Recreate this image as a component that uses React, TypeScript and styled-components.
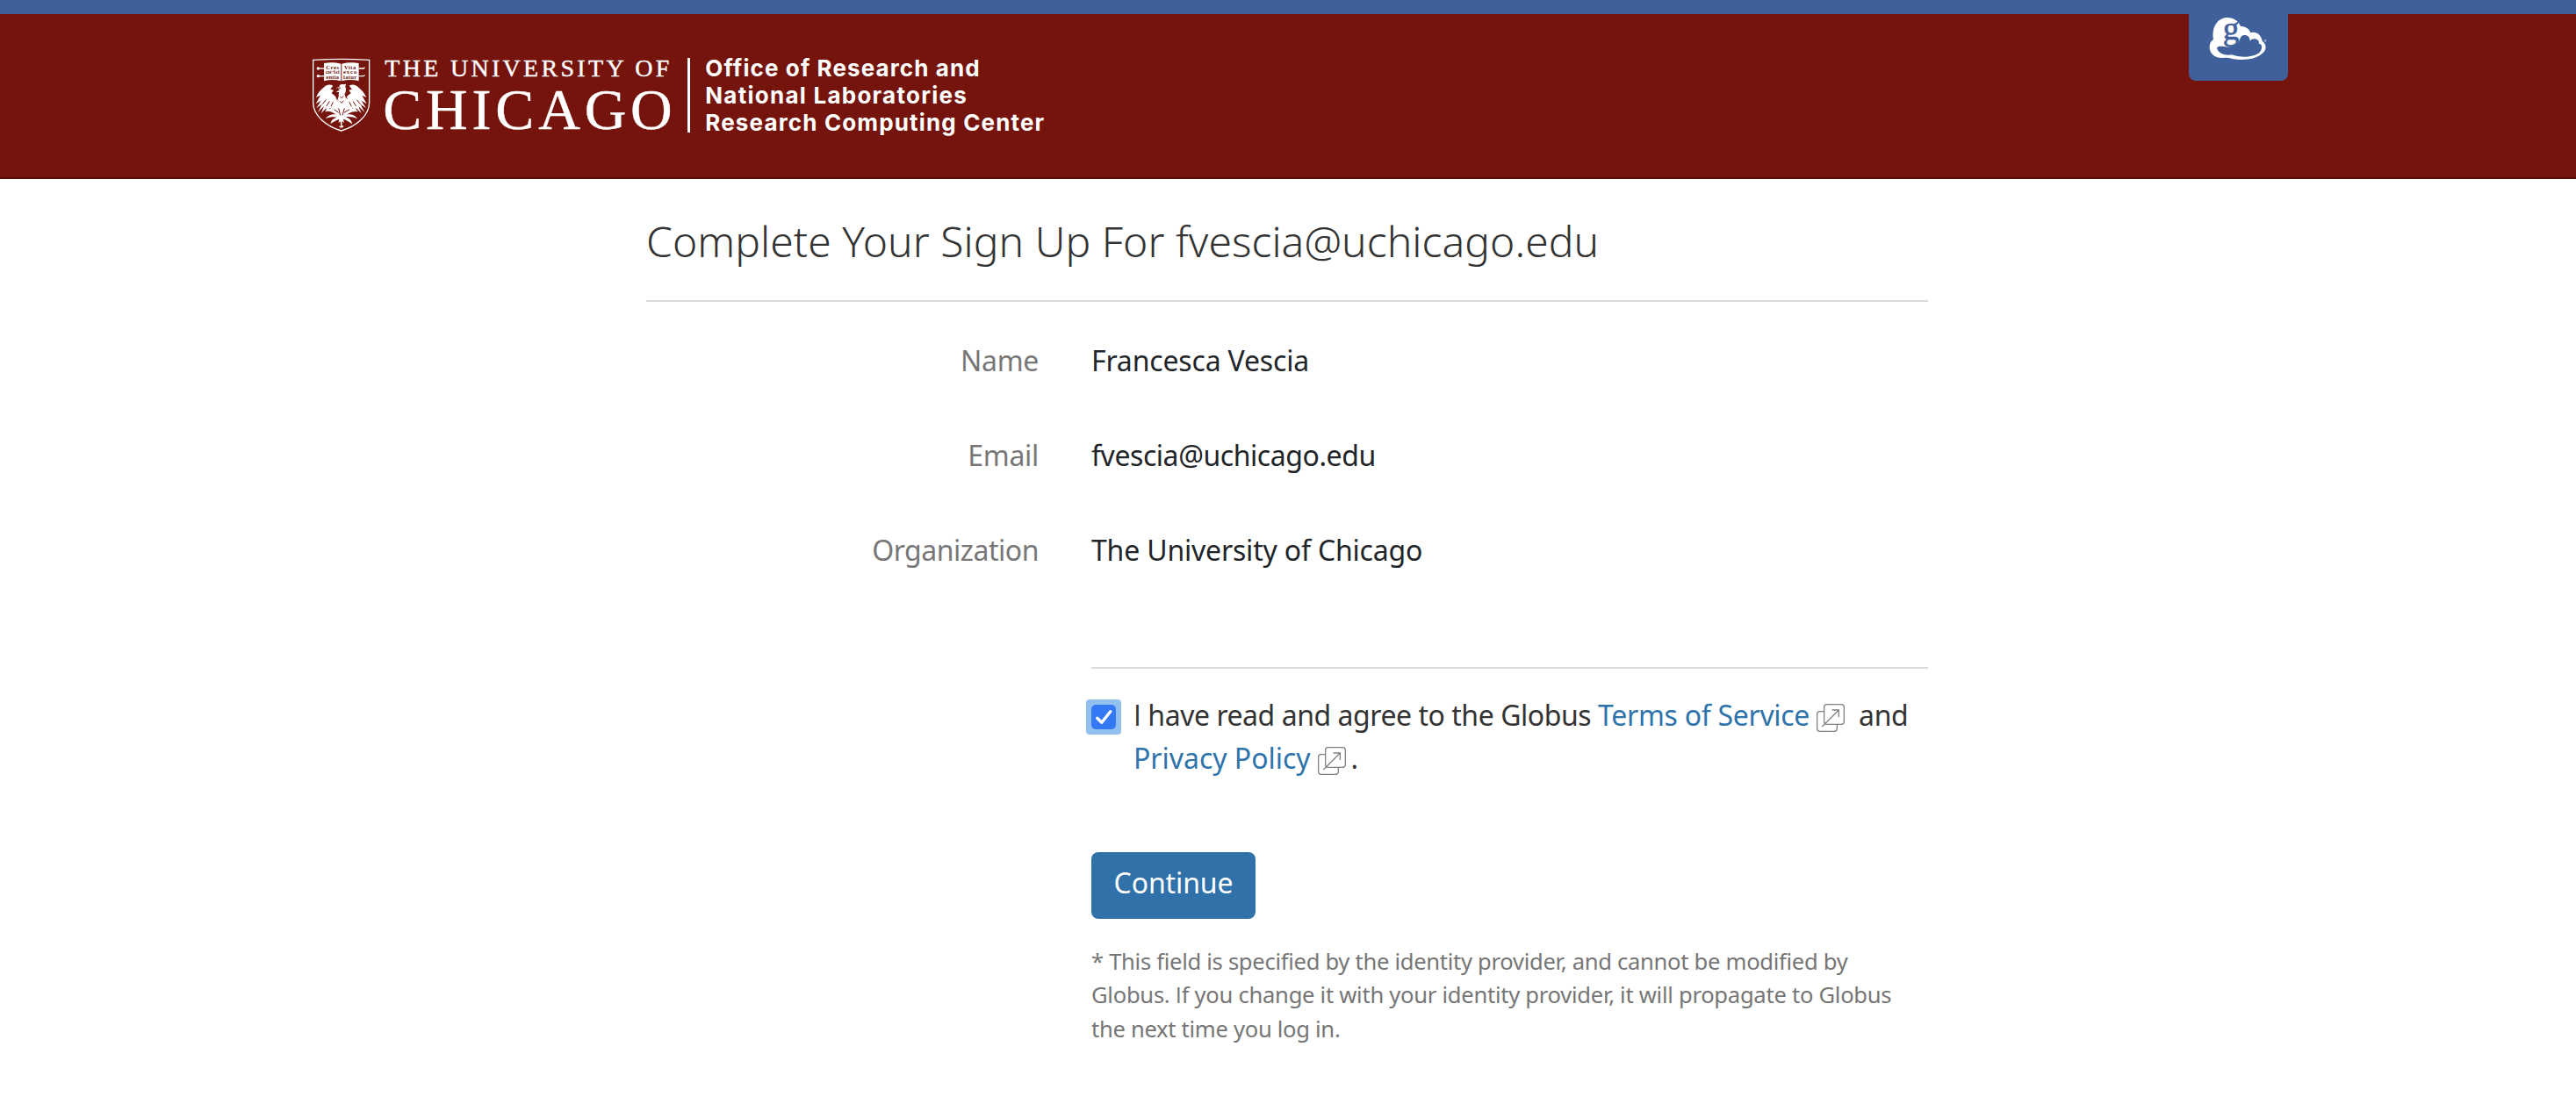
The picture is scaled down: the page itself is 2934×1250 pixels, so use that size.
import React, { useState } from 'react';
import styled, { createGlobalStyle } from 'styled-components';

const sans = '"Noto Sans", "Open Sans", sans-serif';

const GlobalStyle = createGlobalStyle`
  *, *::before, *::after { box-sizing: border-box; }
  body { margin: 0; background: #fff; font-family: ${sans}; font-weight: 370; color: #212529; }
`;

const Tracked = styled.span<{ $spacing: number }>`
  letter-spacing: ${p => p.$spacing}px;
  white-space: nowrap;
`;

const Header = styled.header`
  height: 204px;
  background: #75140d;
  border-top: 16px solid #40609b;
  border-bottom: 2px solid #56100b;
  display: flex;
  justify-content: space-between;
  align-items: flex-start;
  padding: 0 328px 0 355px;
`;

const Brand = styled.div`
  display: flex;
  align-items: flex-start;
  color: #fff;
  padding-top: 45px;
`;

const Shield = styled.svg`
  width: 67.3px;
  height: 84.7px;
  margin-top: 5px;
`;

const Wordmark = styled.div`
  margin: 3px 0 0 16px;
  width: 345px;
  font-family: "Liberation Serif", serif;
  font-weight: 400;
  white-space: nowrap;
  -webkit-text-stroke: 0.4px #fff;
`;

const WordmarkTop = styled.div`
  font-size: 28px;
  line-height: 28px;
  letter-spacing: 3.3px;
`;

const WordmarkMain = styled.div`
  font-size: 66px;
  line-height: 66px;
  letter-spacing: 4.8px;
  margin-left: -2px;
`;

const Divider = styled.div`
  width: 3px;
  height: 85px;
  margin-top: 5px;
  background: #fff;
`;

const Department = styled.div`
  margin: 1px 0 0 17px;
  font-family: Inter, sans-serif;
  font-weight: 680;
  font-size: 26px;
  line-height: 31.2px;
`;

const GlobusBadge = styled.div`
  width: 113px;
  height: 76px;
  background: #40609b;
  border-radius: 0 0 8px 8px;
  display: flex;
  padding: 2px 0 0 22px;
`;

const Cloud = styled.svg`
  width: 68.33px;
  height: 51.67px;
  overflow: visible;
`;

const Content = styled.main`
  width: 1460px;
  margin: 41px 0 0 736px;
`;

const Title = styled.h1`
  margin: 0;
  padding-bottom: 37px;
  border-bottom: 2px solid #dadada;
  font-size: 48px;
  line-height: 60px;
  font-weight: 260;
  color: #333;
`;

const Details = styled.dl`
  margin: 43px 0 0;
  display: grid;
  grid-template-columns: 447px 1fr;
  column-gap: 60px;
  grid-auto-rows: 108px;
  font-size: 32px;
  line-height: 48px;
`;

const Term = styled.dt`
  text-align: right;
  color: #777;
`;

const Detail = styled.dd`
  margin: 0;
`;

const Actions = styled.div`
  margin: 49px 0 0 507px;
  border-top: 2px solid #dadada;
  padding-top: 28px;
`;

const Consent = styled.div`
  display: flex;
  align-items: flex-start;
  font-size: 32px;
  line-height: 49px;
  color: #333;
`;

const FocusRing = styled.div`
  flex: none;
  width: 40px;
  height: 40px;
  margin: 7px 14px 0 -6px;
  padding: 6px;
  border-radius: 4px;
  background: #92c0ef;
`;

const Box = styled.button`
  width: 28px;
  height: 28px;
  padding: 0;
  border: 0;
  border-radius: 5px;
  background: #3478f6;
  display: flex;
`;

const ConsentText = styled.div`
  width: 905px;
`;

const ConsentLine = styled.div`
  display: flex;
  height: 49px;
`;

const Link = styled.a`
  color: #2f73ab;
  text-decoration: none;
`;

const PlainI = styled.span`
  font-family: "Open Sans", sans-serif;
`;

const External = styled.svg`
  width: 32px;
  height: 32px;
  margin: 12px 0 0;
`;

const Gap = styled.span<{ $w: number }>`
  width: ${p => p.$w}px;
`;

const ContinueButton = styled.button`
  display: block;
  width: 187px;
  height: 76px;
  margin-top: 83px;
  padding: 11px 0 17px;
  border: 0;
  border-radius: 8px;
  background: #3071a9;
  color: #fff;
  font: 370 32px/48px ${sans};
`;

const Footnote = styled.p`
  margin: 30px 0 0;
  font-size: 25.6px;
  line-height: 38.4px;
  color: #767676;
`;

function UniversityShield() {
  return (
    <Shield viewBox="15 18 202 254" fill="none">
      <path d="M20 25Q116 19 212 25V170C212 216 166 252 116 267C66 252 20 216 20 170Z" stroke="#fff" strokeWidth="4" />
      <g fill="#fff">
        <path d="M57 36Q88 31 115 38V97Q86 89 57 97Z" />
        <path d="M118 38Q146 31 176 36V97Q147 89 118 97Z" />
        <circle cx="37" cy="54" r="5" /><path d="M37 52h20v4H37z" />
        <circle cx="37" cy="80" r="5" /><path d="M37 78h20v4H37z" />
        <path d="M176 52h15l8-3-5 7h-18zM176 78h15l8-3-5 7h-18z" />
        <path d="M88 113C79 107 66 108 58 117C45 128 35 139 30 153L45 146L29 175L47 164L31 190L50 176L36 204L57 183L47 208L66 188L62 204L78 188L91 194L104 198L102 166C101 153 94 146 83 139L90 128L79 125Z" />
        <path d="M143 113C152 107 165 108 173 117C186 128 196 139 202 153L187 146L203 175L185 164L201 190L182 176L196 204L175 183L185 208L166 188L170 204L154 188L141 194L128 198L130 166C131 153 138 146 149 139L142 128L153 125Z" />
        <path d="M99 121L110 116C108 109 118 106 125 109L132 107L130 116C136 128 127 137 130 148L135 172L128 200H104L101 170L107 149L108 135L98 134L112 127Z" />
        <path d="M104 190C85 185 74 191 60 201C78 199 87 205 98 211C80 209 70 216 62 226C81 218 91 219 101 221C86 226 80 234 80 243C94 233 103 230 109 228L107 240L113 235L115 252C106 247 107 255 116 257C126 256 126 249 118 249L119 234L126 240L123 227C132 230 141 234 153 244C153 233 145 226 132 220C143 218 155 219 171 226C165 215 153 209 136 211C147 203 159 200 175 201C160 190 146 184 128 191Z" />
      </g>
      <g stroke="#75140d" strokeWidth="3">
        <path d="M52 176L64 161M65 183L76 166M81 184L88 169M181 176L169 161M167 183L156 166M151 184L144 169" />
        <path d="M102 122Q107 119 114 121M104 143L99 157M128 140L136 158M112 150L118 155L124 148M111 166L117 172L124 164" />
        <path d="M107 205L91 194M113 214L107 190M120 214L127 190M126 205L144 194" />
      </g>
      <g fill="#75140d" fontFamily="Liberation Serif, serif" fontWeight="700" fontSize="20">
        <text x="64" y="56" textLength="44">Cres</text>
        <text x="62" y="73" textLength="48" lengthAdjust="spacingAndGlyphs">cat·Sci</text>
        <text x="64" y="89" textLength="44">entia</text>
        <text x="126" y="56" textLength="40">Vita</text>
        <text x="123" y="73" textLength="46">exco</text>
        <text x="123" y="89" textLength="46">latur</text>
      </g>
    </Shield>
  );
}

function GlobusCloud() {
  return (
    <Cloud viewBox="136 54 205 155">
      <path
        fill="#fff"
        d="M153 130C148 88 172 60 202 60C222 60 240 72 247 90C263 90 277 98 281 112C297 105 318 116 321 141C335 149 337 168 324 180C304 201 266 206 235 203C214 201 202 196 188 198C163 200 141 185 141 162C141 147 146 140 154 135Z"
      />
      <path
        fill="#40609b"
        d="M166 164C168 157 180 158 191 159C204 162 224 160 233 152C247 147 241 121 259 120C270 119 279 127 279 140C289 129 306 131 310 144C310 148 308 150 311 150C322 150 322 170 311 180C290 197 245 198 217 187C194 191 170 182 166 164Z"
      />
      <text x="186" y="135" fill="#40609b" stroke="#40609b" strokeWidth="2" fontFamily="Liberation Serif, serif" fontSize="113">g</text>
      <circle cx="331" cy="139" r="3.2" fill="none" stroke="#fff" strokeWidth="1.5" />
    </Cloud>
  );
}

function ExternalIcon() {
  return (
    <External viewBox="54 51 96 96" fill="none" stroke="#7f7f7f" strokeWidth="3.8">
      <rect x="80" y="53" width="68" height="68" rx="9" />
      <path d="M80 77H65Q56 77 56 86V136Q56 145 65 145H115Q124 145 124 136V121" />
      <path d="M73 129L130 72M107 72H130V96" />
    </External>
  );
}

const details = [
  { label: 'Name', labelSpacing: -0.3, value: 'Francesca Vescia', spacing: -0.17 },
  { label: 'Email', labelSpacing: -0.3, value: 'fvescia@uchicago.edu', spacing: -0.44 },
  { label: 'Organization', labelSpacing: -0.47, value: 'The University of Chicago', spacing: -0.19 },
];

export default function App() {
  const [agreed, setAgreed] = useState(true);
  return (
    <>
      <GlobalStyle />
      <Header>
        <Brand>
          <UniversityShield />
          <Wordmark>
            <WordmarkTop>THE UNIVERSITY OF</WordmarkTop>
            <WordmarkMain>CHICAGO</WordmarkMain>
          </Wordmark>
          <Divider />
          <Department>
            <Tracked $spacing={1.1}>Office of Research and</Tracked><br />
            <Tracked $spacing={1.25}>National Laboratories</Tracked><br />
            <Tracked $spacing={1.15}>Research Computing Center</Tracked>
          </Department>
        </Brand>
        <GlobusBadge><GlobusCloud /></GlobusBadge>
      </Header>
      <Content>
        <Title><Tracked $spacing={0.05}>Complete Your Sign Up For fvescia@uchicago.edu</Tracked></Title>
        <Details>
          {details.map(d => (
            <React.Fragment key={d.label}>
              <Term><Tracked $spacing={d.labelSpacing}>{d.label}</Tracked></Term>
              <Detail><Tracked $spacing={d.spacing}>{d.value}</Tracked></Detail>
            </React.Fragment>
          ))}
        </Details>
        <Actions>
          <Consent>
            <FocusRing>
              <Box role="checkbox" aria-checked={agreed} onClick={() => setAgreed(!agreed)}>
                {agreed && (
                  <svg width="28" height="28" viewBox="0 0 28 28" fill="none" stroke="#fff" strokeWidth="3.4" strokeLinecap="round" strokeLinejoin="round">
                    <path d="M6.7 15.3L11.8 20.3L21.8 7.8" />
                  </svg>
                )}
              </Box>
            </FocusRing>
            <ConsentText>
              <ConsentLine>
                <Tracked $spacing={-0.46}><PlainI>I</PlainI> have read and agree to the Globus</Tracked>
                <Gap $w={8} />
                <Link><Tracked $spacing={-0.3}>Terms of Service</Tracked></Link>
                <Gap $w={8} /><ExternalIcon /><Gap $w={16} />
                <Tracked $spacing={-0.4}>and</Tracked>
              </ConsentLine>
              <ConsentLine>
                <Link><Tracked $spacing={-0.03}>Privacy Policy</Tracked></Link>
                <Gap $w={8} /><ExternalIcon /><Gap $w={6} />
                <Tracked $spacing={0}>.</Tracked>
              </ConsentLine>
            </ConsentText>
          </Consent>
          <ContinueButton><Tracked $spacing={-0.1}>Continue</Tracked></ContinueButton>
          <Footnote>
            <Tracked $spacing={-0.3}>* This field is specified by the identity provider, and cannot be modified by</Tracked><br />
            <Tracked $spacing={-0.28}>Globus. <PlainI>I</PlainI>f you change it with your identity provider, it will propagate to Globus</Tracked><br />
            <Tracked $spacing={-0.3}>the next time you log in.</Tracked>
          </Footnote>
        </Actions>
      </Content>
    </>
  );
}
